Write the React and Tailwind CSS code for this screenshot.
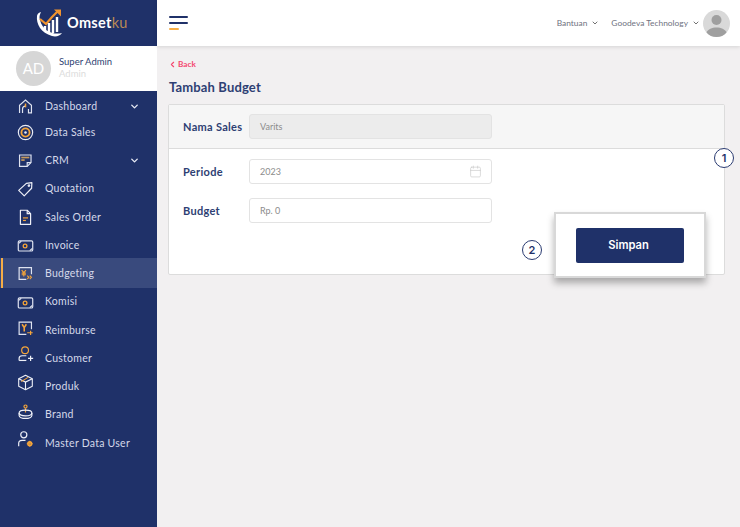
import { ChevronDown, ChevronLeft, Calendar } from 'lucide-react'

const font = { fontFamily: 'Lato' }

const IconHome = () => (
  <svg width="17" height="17" viewBox="0 0 20 20" fill="none" stroke="#dfe3f0" strokeWidth="1.4">
    <path d="M3 17.500V8.500L10 2.500L17 8.500V17.500H13.500V13" />
    <path d="M6.500 17.500V13C6.500 11 8 9.500 10 9.500" />
    <path d="M10 6.500V11" stroke="#f5a53a" strokeWidth="1.8" />
  </svg>
)
const IconTarget = () => (
  <svg width="17" height="17" viewBox="0 0 20 20" fill="none">
    <circle cx="10" cy="10" r="8.400" stroke="#e8ebf5" strokeWidth="1.400" />
    <circle cx="10" cy="10" r="4.800" stroke="#f5a53a" strokeWidth="2.200" />
    <circle cx="10" cy="10" r="1.500" fill="#e8ebf5" />
  </svg>
)
const IconCrm = () => (
  <svg width="17" height="17" viewBox="0 0 20 20" fill="none" stroke="#dfe3f0" strokeWidth="1.4">
    <path d="M3 3.500H16.500V12.500L12 17H3Z" />
    <path d="M12 17V12.500H16.500" />
    <path d="M5 6.500H14.500" stroke="#c79a5c" strokeWidth="2" />
    <path d="M5 9.500H9" stroke="#c79a5c" strokeWidth="2" />
  </svg>
)
const IconTag = () => (
  <svg width="17" height="17" viewBox="0 0 20 20" fill="none" stroke="#eef0f8" strokeWidth="1.400">
    <path d="M2 11L11 2.800L17.500 2L17.200 8.500L8.500 17.500Z" strokeLinejoin="round" />
    <circle cx="14" cy="5.400" r="0.900" />
  </svg>
)
const IconDoc = () => (
  <svg width="17" height="17" viewBox="0 0 20 20" fill="none" stroke="#eef0f8" strokeWidth="1.400">
    <path d="M4 1.500H12L16 5.500V18H4Z" strokeLinejoin="round" />
    <path d="M12 1.500V5.500H16" />
    <path d="M7 10.500H13" stroke="#f5a53a" strokeWidth="1.400" />
    <path d="M7 13.500H10.500" stroke="#f5a53a" strokeWidth="1.400" />
  </svg>
)
const IconBill = () => (
  <svg width="17" height="17" viewBox="0 0 20 20" fill="none" stroke="#dfe3f0" strokeWidth="1.400">
    <rect x="1.500" y="4.500" width="17" height="12" rx="1.500" />
    <circle cx="9.500" cy="10.500" r="2.200" stroke="#f5a53a" strokeWidth="1.500" />
    <path d="M2 7.500L5 5M15 16L18 13.500" />
  </svg>
)
const IconBudget = () => (
  <svg width="17" height="17" viewBox="0 0 20 20" fill="none" stroke="#dfe3f0" strokeWidth="1.400">
    <path d="M17 11V3H2.500V17H11" />
    <path d="M5.500 6L8 9L10.500 6M8 9V13.500M5.500 9.500H10.500M5.500 11.500H10.500" stroke="#f5a53a" strokeWidth="1.300" />
    <path d="M12 12.500L14 14.500L12 16.500M15 12.500L17 14.500L15 16.500" stroke="#f5a53a" strokeWidth="1.300" />
  </svg>
)
const IconReimburse = () => (
  <svg width="17" height="17" viewBox="0 0 20 20" fill="none" stroke="#dfe3f0" strokeWidth="1.400">
    <path d="M17 11V2.500H2.500V17H11" />
    <path d="M6 5L8.500 9L11 5M8.500 9V13.500" stroke="#f5a53a" strokeWidth="1.800" />
    <path d="M12 15H18.500M16 12.500V17.500" stroke="#f5a53a" strokeWidth="1.400" />
  </svg>
)
const IconCustomer = () => (
  <svg width="17" height="17" viewBox="0 0 20 20" fill="none" strokeWidth="1.400">
    <circle cx="9.500" cy="5" r="4" stroke="#f5a53a" />
    <path d="M2.500 17V14.500C2.500 12.500 4 11.500 6 11.500H11" stroke="#eef0f8" />
    <path d="M2.500 17H11" stroke="#eef0f8" />
    <path d="M13 14.500H19M16 11.500V17.500" stroke="#eef0f8" />
  </svg>
)
const IconBox = () => (
  <svg width="17" height="17" viewBox="0 0 20 20" fill="none" stroke="#eef0f8" strokeWidth="1.300">
    <path d="M10 1.500L18 5.500V14.500L10 18.500L2 14.500V5.500Z" strokeLinejoin="round" />
    <path d="M2 5.500L10 9.500L18 5.500M10 9.500V18.500" />
    <path d="M5 9L13 4" stroke="#f5a53a" />
  </svg>
)
const IconBrand = () => (
  <svg width="17" height="17" viewBox="0 0 20 20" fill="none" stroke="#eef0f8" strokeWidth="1.400">
    <circle cx="10" cy="3" r="1.800" stroke="#f5a53a" />
    <path d="M10 5V10" stroke="#f5a53a" />
    <ellipse cx="10" cy="10.500" rx="7.500" ry="3.400" />
    <path d="M2.500 10.500V13.500C2.500 15.500 6 17 10 17C14 17 17.500 15.500 17.500 13.500V10.500" />
  </svg>
)
const IconUserGear = () => (
  <svg width="17" height="17" viewBox="0 0 20 20" fill="none" strokeWidth="1.400">
    <circle cx="8" cy="4.500" r="3.600" stroke="#eef0f8" />
    <path d="M2 18V14.500C2 12.500 3.500 11 6 11H10" stroke="#eef0f8" />
    <circle cx="15" cy="15" r="2.200" stroke="#f5a53a" strokeWidth="1.800" />
    <path d="M15 11.500V18.500M11.500 15H18.500" stroke="#f5a53a" strokeWidth="1.100" />
  </svg>
)

const menu = [
  { label: 'Dashboard', icon: IconHome, caret: true, row: 'h-[25.6px] pt-[2px]' },
  { label: 'Data Sales', icon: IconTarget, row: 'h-[28.25px]' },
  { label: 'CRM', icon: IconCrm, caret: true, row: 'h-[28.25px]' },
  { label: 'Quotation', icon: IconTag, row: 'h-[28.25px]' },
  { label: 'Sales Order', icon: IconDoc, row: 'h-[28.25px]' },
  { label: 'Invoice', icon: IconBill, row: 'h-[28.25px]' },
  { label: 'Budgeting', icon: IconBudget, active: true, row: 'h-[30.25px] -mt-[2px] pt-[2px]' },
  { label: 'Komisi', icon: IconBill, row: 'h-[28.25px]' },
  { label: 'Reimburse', icon: IconReimburse, row: 'h-[28.25px]', lift: '-translate-y-[2px]' },
  { label: 'Customer', icon: IconCustomer, row: 'h-[28.25px]', lift: '-translate-y-[4px]' },
  { label: 'Produk', icon: IconBox, row: 'h-[28.25px]', lift: '-translate-y-[4px]' },
  { label: 'Brand', icon: IconBrand, row: 'h-[28.25px]', lift: '-translate-y-[3px]' },
  { label: 'Master Data User', icon: IconUserGear, row: 'h-[28.25px]', lift: '-translate-y-[4px]' },
]

const Logo = () => (
  <svg width="30" height="30" viewBox="0 0 30 30" fill="none">
    <path d="M2 8C1 16 6 25 17 28C21 29 25 28 27 25C19 27 8 24 5 12C4.500 10 4 8 6 4C3 5 2.200 6.500 2 8Z" fill="#ffffff" />
    <path d="M5 11L11 16L17 9L23 3" stroke="#f0942f" strokeWidth="2.200" />
    <path d="M19 1.500H26V8.500Z" fill="#f0942f" />
    <path d="M10 18V22M14 15V24M18 12V25M22 9V24" stroke="#ffffff" strokeWidth="2.400" />
  </svg>
)

const Sidebar = () => (
  <aside className="w-[157px] h-full bg-[#1f3169] flex flex-col shrink-0">
    <div className="h-[46px] flex items-center pl-[35px] shrink-0">
      <Logo />
      <span className="text-[14.5px] font-bold text-white tracking-[0.3px] ml-[2px]">
        Omset<span className="text-[#b98a55] font-normal">ku</span>
      </span>
    </div>
    <div className="h-[45px] bg-white flex items-center pl-[16px] gap-[8px] shrink-0">
      <div className="w-[35px] h-[35px] rounded-full bg-[#d6d6d6] text-white text-[15px] flex items-center justify-center">
        AD
      </div>
      <div className="flex flex-col leading-[12px] -mt-[1px]">
        <span className="text-[9.5px] text-[#2e3f73]">Super Admin</span>
        <span className="text-[9.5px] text-[#dcdcdc]">Admin</span>
      </div>
    </div>
    <nav className="flex flex-col pt-[2px]">
      {menu.map((item) => (
        <div
          key={item.label}
          className={`relative ${item.row} flex items-center pl-[16px] ${item.active ? 'bg-[#394a7d]' : ''}`}
        >
          {item.active && <span className="absolute left-[1px] top-0 bottom-0 w-[2px] bg-[#f6ad47]" />}
          <span className={`w-[19px] flex justify-center ${item.lift || ''}`}>
            <item.icon />
          </span>
          <span className="ml-[10px] text-[10.5px] text-[#d5d9ea] tracking-[0.25px]">{item.label}</span>
          {item.caret && (
            <ChevronDown className="absolute right-[17px] top-[8px] text-[#e8ebf5]" size={11} strokeWidth={3} />
          )}
        </div>
      ))}
    </nav>
  </aside>
)

const Header = () => (
  <header className="h-[46px] bg-white shadow-[0_1px_4px_rgba(0,0,0,0.12)] flex items-center justify-between pl-[12px] pr-[10px] shrink-0 relative">
    <div className="flex flex-col gap-[4px]">
      <span className="w-[19px] h-[2px] bg-[#1f3169] rounded" />
      <span className="w-[19px] h-[2px] bg-[#1f3169] rounded" />
      <span className="w-[10px] h-[2px] bg-[#f6ad47] rounded" />
    </div>
    <div className="flex items-center text-[8.4px] text-[#6f7280]">
      <span>Bantuan</span>
      <ChevronDown className="ml-[4px] mr-[12px] text-[#555]" size={8} strokeWidth={2.5} />
      <span>Goodeva Technology</span>
      <ChevronDown className="ml-[4px] mr-[3px] text-[#555]" size={8} strokeWidth={2.5} />
      <svg width="27" height="27" viewBox="0 0 27 27">
        <circle cx="13.500" cy="13.500" r="13.500" fill="#d9d9d9" />
        <circle cx="13.500" cy="10" r="5" fill="#9f9f9f" />
        <path d="M3.500 22.500C5 19 9 17.500 13.500 17.500C18 17.500 22 19 23.500 22.500C21 25.500 17.500 27 13.500 27C9.500 27 6 25.500 3.500 22.500Z" fill="#9f9f9f" />
      </svg>
    </div>
  </header>
)

const Field = ({ label, value, disabled, icon }) => (
  <div className="flex items-center">
    <label className="w-[67px] shrink-0 pt-[2px] pl-[1px] text-[11px] font-bold text-[#2e3f73] tracking-[0.3px] whitespace-nowrap">{label}</label>
    <div
      className={`w-[243px] h-[25px] rounded-[3px] border border-[#e3e3e3] flex items-center justify-between pl-[10px] pr-[9px] text-[9px] text-[#8c8c8c] ${disabled ? 'bg-[#ececec]' : 'bg-white'}`}
    >
      <span>{value}</span>
      {icon && <Calendar className="text-[#c8c8c8]" size={13} strokeWidth={1.2} />}
    </div>
  </div>
)

const Badge = ({ n, className }) => (
  <span
    className={`absolute w-[20px] h-[20px] rounded-full border border-[#2a3b71] bg-white text-[#1f3169] text-[11px] font-semibold flex items-center justify-center ${className}`}
    style={{ fontFamily: 'Inter' }}
  >
    {n}
  </span>
)

export default function App() {
  return (
    <div className="w-[740px] h-[527px] flex overflow-hidden bg-[#f2f0f1] relative" style={font}>
      <Sidebar />
      <main className="flex-1 flex flex-col min-w-0">
        <Header />
        <div className="pl-[11px] pr-[15px] pt-[13px]">
          <div className="flex items-center text-[8.2px] font-bold text-[#f4476f] h-[10px]">
            <ChevronLeft size={9} strokeWidth={3} />
            <span className="ml-[1px]">Back</span>
          </div>
          <h1 className="mt-[9px] ml-[1px] text-[13px] font-bold text-[#2e3f73] leading-[18px] tracking-[0.15px]">Tambah Budget</h1>
          <section className="mt-[8px] h-[171px] bg-white border border-[#dcdcdc] rounded-[2px]">
            <div className="h-[44px] bg-[#f6f6f6] border-b border-[#dcdcdc] flex items-center px-[13px]">
              <Field label="Nama Sales" value="Varits" disabled />
            </div>
            <div className="flex flex-col gap-[14px] px-[13px] pt-[10px]">
              <Field label="Periode" value="2023" icon />
              <Field label="Budget" value="Rp. 0" />
            </div>
          </section>
        </div>
      </main>

      <Badge n="1" className="left-[714px] top-[148px]" />
      <Badge n="2" className="left-[522px] top-[240px]" />
      <div className="absolute left-[554px] top-[212px] w-[152px] h-[66px] bg-white border-2 border-[#d8d8d8] shadow-[0_5px_7px_rgba(0,0,0,0.3)] flex items-center justify-center">
        <button
          className="w-[108px] h-[35px] rounded-[2px] bg-[#1f3169] text-white text-[11.2px] font-semibold pt-[1px] pr-[3px]"
          style={{ fontFamily: 'Inter' }}
        >
          Simpan
        </button>
      </div>
    </div>
  )
}
